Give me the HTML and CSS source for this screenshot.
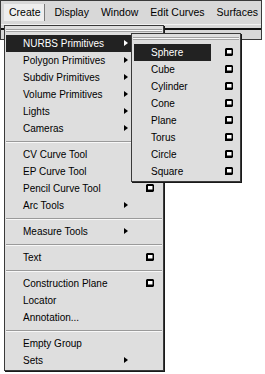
FILE: index.html
```html
<!DOCTYPE html>
<html lang="en">
<head>
    <meta charset="UTF-8">
    <meta name="viewport" content="width=device-width, initial-scale=1.0">
    <title>Create Menu</title>
    <link rel="stylesheet" href="styles.css">
</head>
<body>
    <div class="header">
        <div class="menubar">
            <span class="mb-item active">Create</span>
            <span class="mb-item">Display</span>
            <span class="mb-item">Window</span>
            <span class="mb-item">Edit Curves</span>
            <span class="mb-item">Surfaces</span>
        </div>
        <div class="rule"></div>
    </div>

    <div class="menu create-menu">
        <div class="tearoff"></div>
        <div class="item hl"><span class="cell">NURBS Primitives<i class="arrow"></i></span><span class="opt"></span></div>
        <div class="item"><span class="cell">Polygon Primitives<i class="arrow"></i></span><span class="opt"></span></div>
        <div class="item"><span class="cell">Subdiv Primitives<i class="arrow"></i></span><span class="opt"></span></div>
        <div class="item"><span class="cell">Volume Primitives<i class="arrow"></i></span><span class="opt"></span></div>
        <div class="item"><span class="cell">Lights<i class="arrow"></i></span><span class="opt"></span></div>
        <div class="item"><span class="cell">Cameras<i class="arrow"></i></span><span class="opt"></span></div>
        <div class="sep"></div>
        <div class="item"><span class="cell">CV Curve Tool</span><span class="opt"></span></div>
        <div class="item"><span class="cell">EP Curve Tool</span><span class="opt"></span></div>
        <div class="item"><span class="cell">Pencil Curve Tool</span><span class="opt"><svg class="box" width="8" height="8" viewBox="0 0 8 8"><path d="M0 1L1 0H7L8 1V7L7 8H0Z" fill="#000"/><rect x="2" y="2" width="4.5" height="3.5" fill="#fff"/></svg></span></div>
        <div class="item"><span class="cell">Arc Tools<i class="arrow"></i></span><span class="opt"></span></div>
        <div class="sep"></div>
        <div class="item"><span class="cell">Measure Tools<i class="arrow"></i></span><span class="opt"></span></div>
        <div class="sep"></div>
        <div class="item"><span class="cell">Text</span><span class="opt"><svg class="box" width="8" height="8" viewBox="0 0 8 8"><path d="M0 1L1 0H7L8 1V7L7 8H0Z" fill="#000"/><rect x="2" y="2" width="4.5" height="3.5" fill="#fff"/></svg></span></div>
        <div class="sep"></div>
        <div class="item"><span class="cell">Construction Plane</span><span class="opt"><svg class="box" width="8" height="8" viewBox="0 0 8 8"><path d="M0 1L1 0H7L8 1V7L7 8H0Z" fill="#000"/><rect x="2" y="2" width="4.5" height="3.5" fill="#fff"/></svg></span></div>
        <div class="item"><span class="cell">Locator</span><span class="opt"></span></div>
        <div class="item"><span class="cell">Annotation...</span><span class="opt"></span></div>
        <div class="sep"></div>
        <div class="item"><span class="cell">Empty Group</span><span class="opt"></span></div>
        <div class="item"><span class="cell">Sets<i class="arrow"></i></span><span class="opt"></span></div>
    </div>

    <div class="menu sub-menu">
        <div class="tearoff"></div>
        <div class="item hl"><span class="cell">Sphere</span><span class="opt"><svg class="box" width="8" height="8" viewBox="0 0 8 8"><path d="M0 1L1 0H7L8 1V7L7 8H0Z" fill="#000"/><rect x="2" y="2" width="4.5" height="3.5" fill="#fff"/></svg></span></div>
        <div class="item"><span class="cell">Cube</span><span class="opt"><svg class="box" width="8" height="8" viewBox="0 0 8 8"><path d="M0 1L1 0H7L8 1V7L7 8H0Z" fill="#000"/><rect x="2" y="2" width="4.5" height="3.5" fill="#fff"/></svg></span></div>
        <div class="item"><span class="cell">Cylinder</span><span class="opt"><svg class="box" width="8" height="8" viewBox="0 0 8 8"><path d="M0 1L1 0H7L8 1V7L7 8H0Z" fill="#000"/><rect x="2" y="2" width="4.5" height="3.5" fill="#fff"/></svg></span></div>
        <div class="item"><span class="cell">Cone</span><span class="opt"><svg class="box" width="8" height="8" viewBox="0 0 8 8"><path d="M0 1L1 0H7L8 1V7L7 8H0Z" fill="#000"/><rect x="2" y="2" width="4.5" height="3.5" fill="#fff"/></svg></span></div>
        <div class="item"><span class="cell">Plane</span><span class="opt"><svg class="box" width="8" height="8" viewBox="0 0 8 8"><path d="M0 1L1 0H7L8 1V7L7 8H0Z" fill="#000"/><rect x="2" y="2" width="4.5" height="3.5" fill="#fff"/></svg></span></div>
        <div class="item"><span class="cell">Torus</span><span class="opt"><svg class="box" width="8" height="8" viewBox="0 0 8 8"><path d="M0 1L1 0H7L8 1V7L7 8H0Z" fill="#000"/><rect x="2" y="2" width="4.5" height="3.5" fill="#fff"/></svg></span></div>
        <div class="item"><span class="cell">Circle</span><span class="opt"><svg class="box" width="8" height="8" viewBox="0 0 8 8"><path d="M0 1L1 0H7L8 1V7L7 8H0Z" fill="#000"/><rect x="2" y="2" width="4.5" height="3.5" fill="#fff"/></svg></span></div>
        <div class="item"><span class="cell">Square</span><span class="opt"><svg class="box" width="8" height="8" viewBox="0 0 8 8"><path d="M0 1L1 0H7L8 1V7L7 8H0Z" fill="#000"/><rect x="2" y="2" width="4.5" height="3.5" fill="#fff"/></svg></span></div>
    </div>
</body>
</html>
```

FILE: styles.css
```css
body {
    margin: 0;
    background: #fff;
    font-family: 'Liberation Sans', Arial, sans-serif;
    color: #000;
}
.header {
    box-sizing: border-box;
    width: 262px;
    height: 40px;
    background: #d8d8d8;
    border: 1px solid #3a3a3a;
}
.menubar {
    display: flex;
    align-items: center;
    height: 23px;
    padding-left: 3px;
    border-bottom: 1px solid #f2f2f2;
    font-size: 10.5px;
    white-space: nowrap;
}
.mb-item {
    flex-shrink: 0;
    padding: 0 6px;
    line-height: 17px;
}
.mb-item.active {
    background: #eeeeee;
    border-right: 1px solid #7a7a7a;
    padding: 0 3px 0 5px;
    margin-right: 4px;
}
.rule {
    height: 2px;
    margin-top: 3px;
    background: #111;
}
.menu {
    position: absolute;
    box-sizing: border-box;
    background: #dedede;
    border: 1px solid #3a3a3a;
    box-shadow: 1px 1px 0 #1a1a1a;
    font-size: 10px;
    white-space: nowrap;
}
.create-menu {
    left: 4px;
    top: 25px;
    width: 160px;
    padding-bottom: 1.5px;
}
.sub-menu {
    left: 131px;
    top: 33px;
    width: 110px;
    padding-bottom: 1.5px;
}
.tearoff {
    height: 8.5px;
    padding-top: 3px;
    box-sizing: border-box;
}
.sub-menu .tearoff {
    height: 9.5px;
}
.tearoff::before {
    content: "";
    display: block;
    height: 1px;
    margin: 0 1px;
    background: #fafafa;
    border-top: 1px solid #a4a4a4;
    border-bottom: 1px solid #a4a4a4;
}
.item {
    display: flex;
    height: 17px;
    align-items: stretch;
}
.cell {
    display: flex;
    align-items: center;
    justify-content: space-between;
    box-sizing: border-box;
}
.create-menu .cell {
    width: 125px;
    margin-left: 1px;
    padding: 0 3px 0 17px;
}
.sub-menu .cell {
    width: 77px;
    margin-left: 2px;
    padding-left: 17px;
}
.opt {
    display: flex;
    align-items: center;
}
.create-menu .opt {
    padding-left: 15px;
}
.sub-menu .opt {
    padding-left: 14px;
}
.arrow {
    width: 0;
    height: 0;
    border-left: 4px solid #000;
    border-top: 3.5px solid transparent;
    border-bottom: 3.5px solid transparent;
}
.hl .cell {
    background: #222;
    color: #fff;
}
.hl .arrow {
    border-left-color: #fff;
}
.sep {
    height: 9px;
    padding-top: 4px;
    box-sizing: border-box;
}
.sep::before {
    content: "";
    display: block;
    height: 1px;
    margin: 0 1px;
    background: #9a9a9a;
    border-bottom: 1px solid #f8f8f8;
}
.box {
    display: block;
}
```
